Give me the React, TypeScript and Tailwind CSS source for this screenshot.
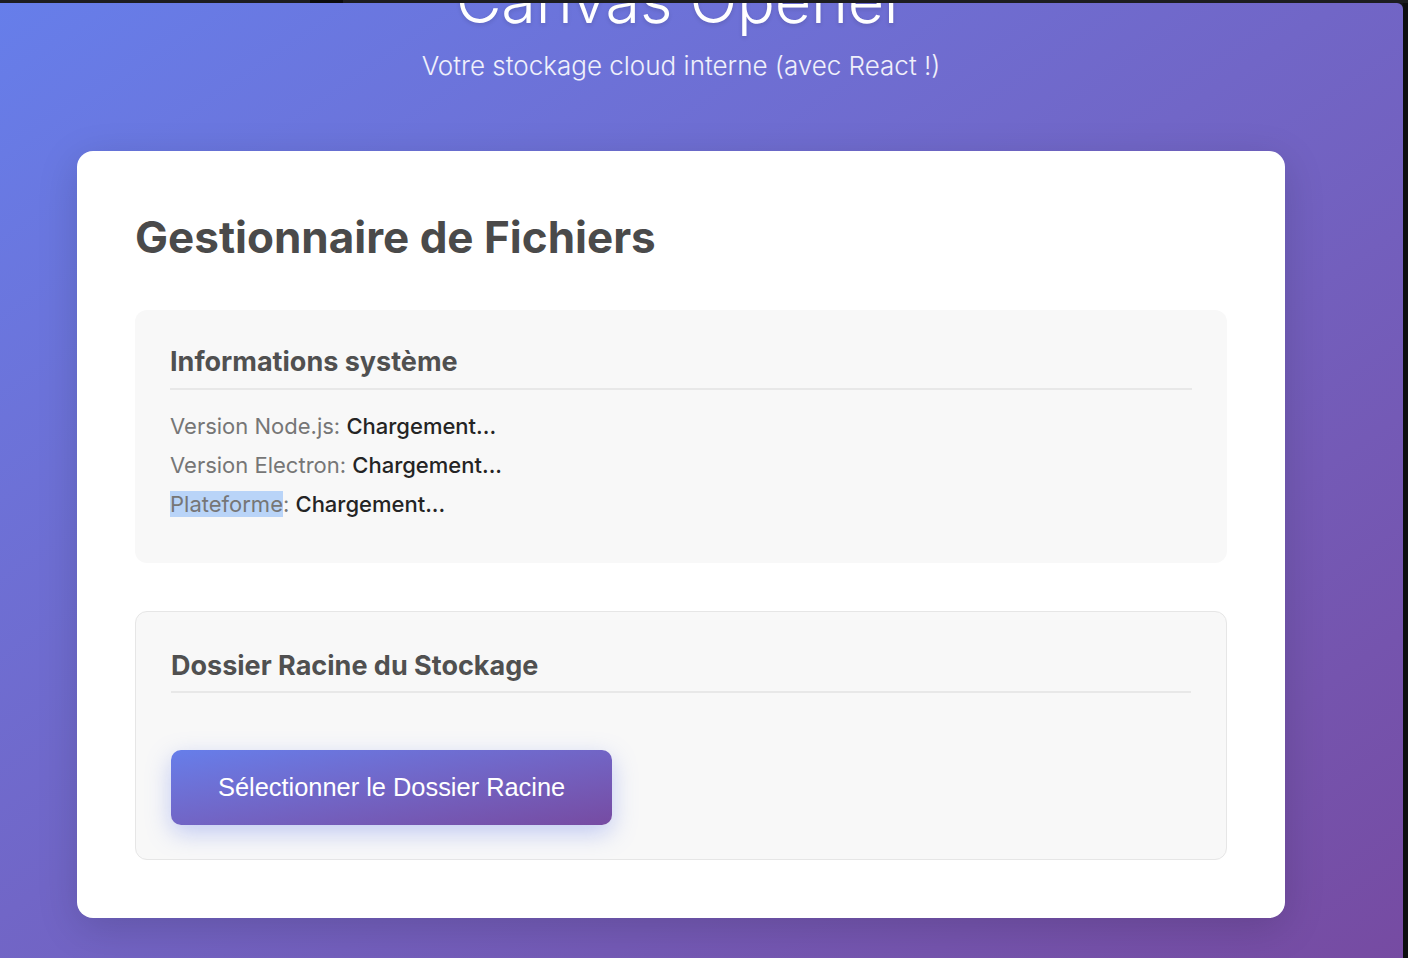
import React from 'react';

const font = { fontFamily: 'Inter, "Noto Sans", sans-serif' };

const InfoRow: React.FC<{ label: string; value: string; selected?: boolean }> = ({ label, value, selected }) => (
  <p className="text-[22px] leading-[39px] text-[#767676]">
    {selected ? <span className="bg-[#b9d4f8]">{label}</span> : label}:{' '}
    <span className="font-medium text-[#242424]">{value}</span>
  </p>
);

const Section: React.FC<{ title: string; bordered?: boolean; children: React.ReactNode }> = ({ title, bordered, children }) => (
  <section
    className={`rounded-[12px] bg-[#f8f8f8] px-[35px] ${bordered ? 'border border-[#e6e6e6]' : ''}`}
  >
    <h2
      className={`${bordered ? 'pt-[38px] pb-[9px]' : 'pt-[36px] pb-[10px]'} border-b-2 border-[#e8e8e8] text-[27px] leading-[32px] font-bold text-[#505050]`}
    >
      {title}
    </h2>
    {children}
  </section>
);

const App: React.FC = () => {
  const [rootPath] = React.useState<string | null>(null);

  return (
    <div className="h-[958px] w-[1408px] flex flex-col bg-[#151517] overflow-hidden" style={font}>
      <div className="h-[3px] shrink-0 flex">
        <div className="w-[310px] bg-[#1d1d20]" />
        <div className="w-[33px] bg-[#0b0b0c]" />
        <div className="flex-1 bg-[#1d1d20]" />
      </div>
      <div className="flex-1 flex min-h-0">
        <main className="flex-1 min-w-0 overflow-hidden rounded-tr-[6px] bg-gradient-to-br from-[#667eea] to-[#764ba2] pl-[77px]">
          <div className="w-[1208px]">
            <header className="text-center text-white">
              <h1 className="mt-[-39px] text-[63px] leading-[72px] font-light tracking-[-0.3px] [text-shadow:0_2px_4px_rgba(0,0,0,0.12)]">
                Canvas Opener
              </h1>
              <p className="mt-[15px] text-[26px] leading-[30px] font-light text-white/90">
                Votre stockage cloud interne (avec React !)
              </p>
            </header>

            <div className="mt-[70px] rounded-[16px] bg-white px-[58px] pt-[60px] pb-[58px] shadow-[0_10px_40px_rgba(0,0,0,0.15)]">
              <h1 className="text-[44px] leading-[53px] font-bold text-[#4a4a4a]">
                Gestionnaire de Fichiers
              </h1>

              <div className="mt-[46px] flex flex-col gap-[48px]">
                <Section title="Informations système">
                  <div className="pt-[17px] pb-[39px]">
                    <InfoRow label="Version Node.js" value="Chargement..." />
                    <InfoRow label="Version Electron" value="Chargement..." />
                    <InfoRow label="Plateforme" value="Chargement..." selected />
                  </div>
                </Section>

                <Section title="Dossier Racine du Stockage" bordered>
                  <div className="pt-[57px] pb-[34px]">
                    {rootPath ? <p className="text-[#555]">{rootPath}</p> : null}
                    <button
                      type="button"
                      className="rounded-[10px] bg-gradient-to-br from-[#667eea] to-[#764ba2] px-[47px] py-[23px] text-[25.4px] leading-[29px] text-white shadow-[0_8px_24px_rgba(102,126,234,0.38)]"
                      style={{ fontFamily: '"Liberation Sans", Arial, sans-serif' }}
                    >
                      Sélectionner le Dossier Racine
                    </button>
                  </div>
                </Section>
              </div>
            </div>
          </div>
        </main>
        <div className="w-[5px] shrink-0 bg-[#0e0e10]" />
      </div>
    </div>
  );
};

export default App;
